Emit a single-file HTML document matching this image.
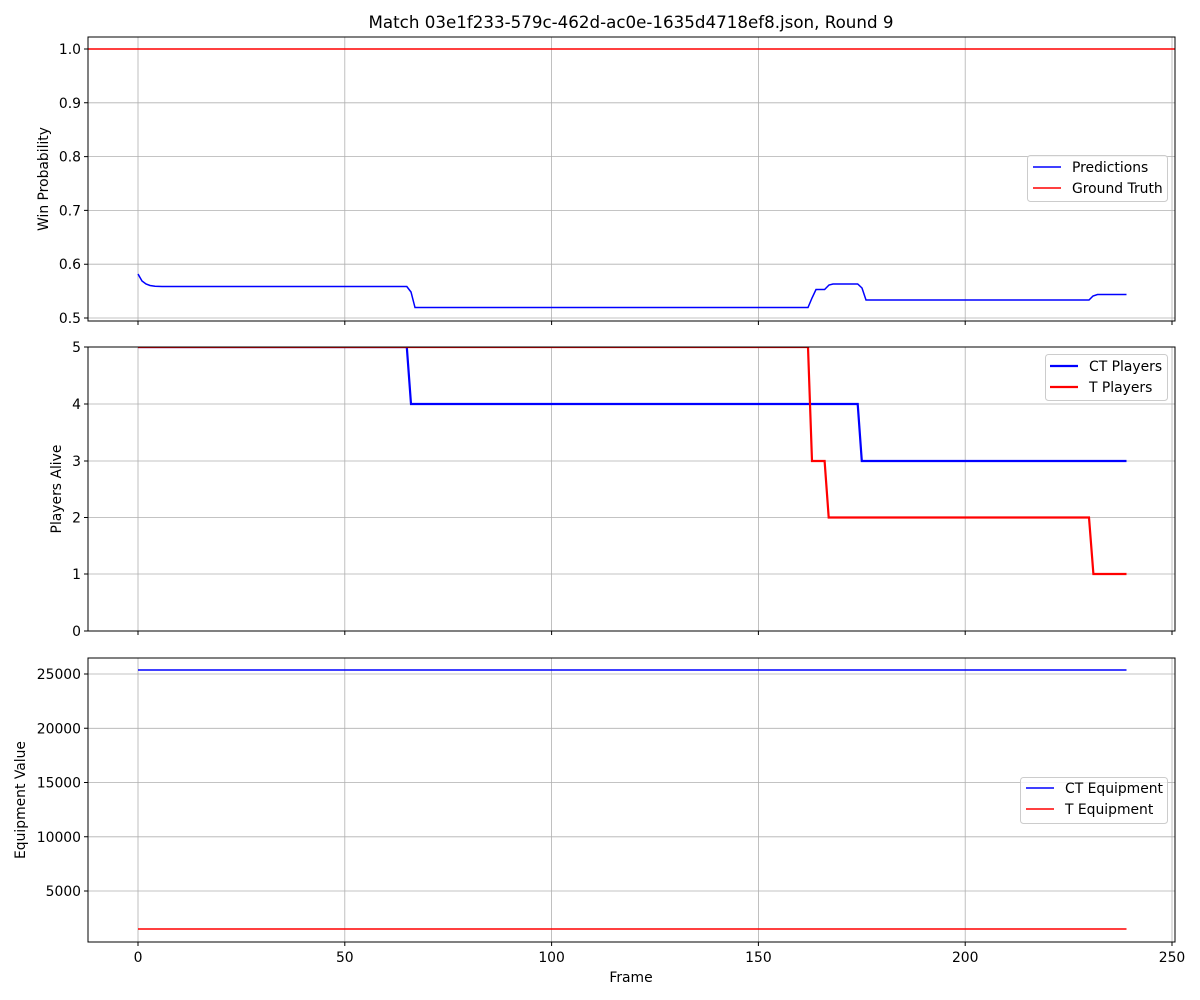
<!DOCTYPE html>
<html><head><style>body{margin:0;background:#fff}svg{display:block}text{font-family:"DejaVu Sans","Liberation Sans",sans-serif;font-size:13.9px;fill:#000}</style></head><body>
<svg width="1200" height="1000" viewBox="0 0 1200 1000" xmlns="http://www.w3.org/2000/svg">
<defs><clipPath id="c2"><rect x="88" y="347" width="1087" height="284"/></clipPath></defs>
<rect width="1200" height="1000" fill="#fff"/>
<text x="631" y="28" text-anchor="middle" style="font-size:16.7px">Match 03e1f233-579c-462d-ac0e-1635d4718ef8.json, Round 9</text>
<g stroke="#b0b0b0" stroke-width="0.8">
<path d="M138 37V321M344.8 37V321M551.6 37V321M758.4 37V321M965.2 37V321M1172 37V321"/>
<path d="M88 49H1175M88 102.8H1175M88 156.6H1175M88 210.4H1175M88 264.2H1175M88 318H1175"/>
<path d="M138 347V631M344.8 347V631M551.6 347V631M758.4 347V631M965.2 347V631M1172 347V631"/>
<path d="M88 404H1175M88 461H1175M88 517.5H1175M88 574H1175"/>
<path d="M138 658V942M344.8 658V942M551.6 658V942M758.4 658V942M965.2 658V942M1172 658V942"/>
<path d="M88 674H1175M88 728.3H1175M88 782.5H1175M88 836.8H1175M88 891H1175"/>
</g>
<path d="M88 49H1175" stroke="#f00" stroke-width="1.5"/>
<path d="M138 274L142 281L146 284L150 285.5L155 286.3L162 286.5L406.8 286.5L411 292L415 307.5L808 307.5L812 298L816 289.5L824.6 289.5L829 285L833 284L857.7 284L862 288L866 300L1089 300L1093 296L1097.5 294.5L1126.5 294.5" fill="none" stroke="#00f" stroke-width="1.5"/>
<g clip-path="url(#c2)">
<path d="M138 347H406.8L411 404H857.7L861.8 461H1126.5" fill="none" stroke="#00f" stroke-width="2.2"/>
<path d="M138 347H808L812 461H824.6L828.7 517.5H1089L1093.4 574H1126.5" fill="none" stroke="#f00" stroke-width="2.2"/>
</g>
<path d="M138 670H1126.5" stroke="#00f" stroke-width="1.5"/>
<path d="M138 929H1126.5" stroke="#f00" stroke-width="1.5"/>
<g fill="none" stroke="#000" stroke-width="1">
<rect x="88" y="37" width="1087" height="284"/>
<rect x="88" y="347" width="1087" height="284"/>
<rect x="88" y="658" width="1087" height="284"/>
<path d="M138 321v4M344.8 321v4M551.6 321v4M758.4 321v4M965.2 321v4M1172 321v4M138 631v4M344.8 631v4M551.6 631v4M758.4 631v4M965.2 631v4M1172 631v4M138 942v4M344.8 942v4M551.6 942v4M758.4 942v4M965.2 942v4M1172 942v4"/>
<path d="M84 49h4M84 102.8h4M84 156.6h4M84 210.4h4M84 264.2h4M84 318h4M84 347h4M84 404h4M84 461h4M84 517.5h4M84 574h4M84 631h4M84 674h4M84 728.3h4M84 782.5h4M84 836.8h4M84 891h4"/>
</g>
<g text-anchor="end">
<text x="81" y="54">1.0</text><text x="81" y="107.8">0.9</text><text x="81" y="161.6">0.8</text><text x="81" y="215.4">0.7</text><text x="81" y="269.2">0.6</text><text x="81" y="323">0.5</text>
<text x="81" y="352">5</text><text x="81" y="409">4</text><text x="81" y="466">3</text><text x="81" y="522.5">2</text><text x="81" y="579">1</text><text x="81" y="636">0</text>
<text x="81" y="679">25000</text><text x="81" y="733.3">20000</text><text x="81" y="787.5">15000</text><text x="81" y="841.8">10000</text><text x="81" y="896">5000</text>
</g>
<g text-anchor="middle">
<text x="138" y="962">0</text><text x="344.8" y="962">50</text><text x="551.6" y="962">100</text><text x="758.4" y="962">150</text><text x="965.2" y="962">200</text><text x="1172" y="962">250</text>
<text x="631" y="982">Frame</text>
</g>
<text transform="translate(48 179) rotate(-90)" text-anchor="middle">Win Probability</text>
<text transform="translate(61 489) rotate(-90)" text-anchor="middle">Players Alive</text>
<text transform="translate(25 800) rotate(-90)" text-anchor="middle">Equipment Value</text>
<g>
<rect x="1027.5" y="155.5" width="140" height="46" rx="3" fill="#fff" fill-opacity="0.8" stroke="#ccc"/>
<path d="M1033 167h28" stroke="#00f" stroke-width="1.5"/><path d="M1033 188h28" stroke="#f00" stroke-width="1.5"/>
<text x="1072" y="172">Predictions</text><text x="1072" y="193">Ground Truth</text>
<rect x="1045.5" y="354.5" width="122" height="46" rx="3" fill="#fff" fill-opacity="0.8" stroke="#ccc"/>
<path d="M1050 366h28" stroke="#00f" stroke-width="2.2"/><path d="M1050 387h28" stroke="#f00" stroke-width="2.2"/>
<text x="1089" y="371">CT Players</text><text x="1089" y="392">T Players</text>
<rect x="1020.5" y="777.5" width="147" height="46" rx="3" fill="#fff" fill-opacity="0.8" stroke="#ccc"/>
<path d="M1026 788h28" stroke="#00f" stroke-width="1.5"/><path d="M1026 809h28" stroke="#f00" stroke-width="1.5"/>
<text x="1065" y="793">CT Equipment</text><text x="1065" y="814">T Equipment</text>
</g>
</svg>
</body></html>
